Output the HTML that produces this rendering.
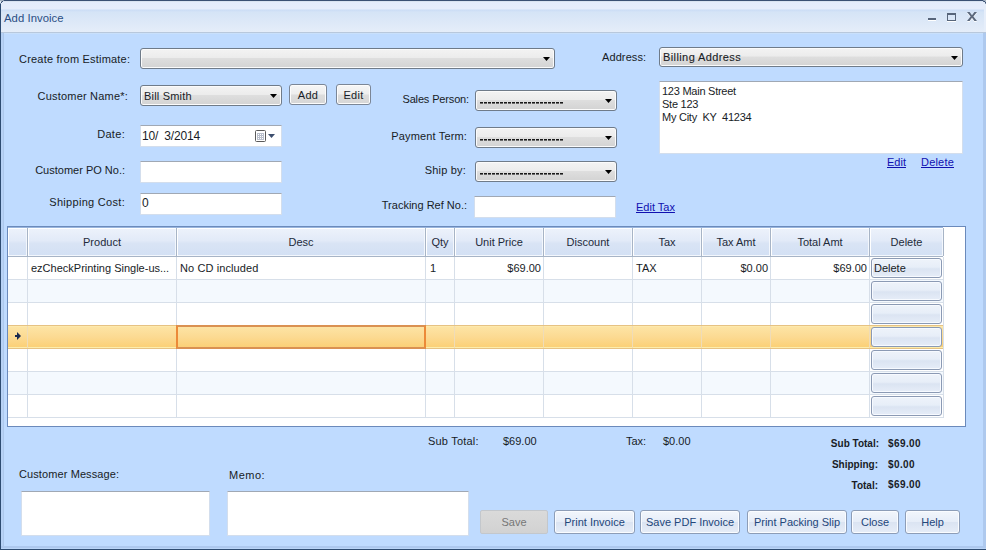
<!DOCTYPE html>
<html><head><meta charset="utf-8">
<style>
*{box-sizing:border-box}
html,body{margin:0;padding:0;width:986px;height:550px;overflow:hidden;background:#bfdbff}
body{position:relative;font-family:"Liberation Sans",sans-serif;font-size:11px;color:#181c26}
.a{position:absolute}
.t{position:absolute;font-size:11px;line-height:13px;white-space:pre}
.r{text-align:right}
.c{text-align:center}
.combo{position:absolute;border:1px solid #6f7b89;border-radius:3px;background:linear-gradient(#f3f3f3 0%,#ececec 45%,#dedede 50%,#d3d3d3 100%);box-shadow:inset 0 0 0 1px #fbfbfb}
.btn{position:absolute;border:1px solid #8d9db7;border-radius:3px;background:linear-gradient(#f2f6fc 0%,#e6edf8 50%,#dbe4f2 52%,#e6edf8 100%);box-shadow:inset 0 0 0 1px #fafcff;color:#23467a;text-align:center;font-size:11px;white-space:pre}
.lnk{position:absolute;color:#1010b0;text-decoration:underline;font-size:11px;line-height:13px;white-space:pre}
</style></head><body>
<div class="a" style="left:0px;top:0px;width:986px;height:550px;background:#bfdbff"></div>
<div class="a" style="left:0px;top:0px;width:986px;height:34px;background:linear-gradient(#3a5073 0px,#3a5073 1px,#d9e3f0 1px,#d9e3f0 2px,#e4ecfb 2px,#e6edfb 9px,#cbddf5 10px,#d5e4f6 12px,#e5edf9 32px,#b8c8dc 32px,#b8c8dc 33px,#c9e0fb 33px,#c9e0fb 34px)"></div>
<div class="a" style="left:0px;top:0px;width:1px;height:550px;background:#2e4c72"></div>
<div class="a" style="left:1px;top:33px;width:2px;height:514px;background:#b7d2f6"></div>
<div class="a" style="left:3px;top:33px;width:1px;height:514px;background:#adc8ec"></div>
<div class="a" style="left:983px;top:33px;width:3px;height:514px;background:#aec9ee"></div>
<div class="a" style="left:984px;top:1px;width:2px;height:31px;background:#e6eefa"></div>
<div class="a" style="left:1px;top:546px;width:985px;height:2px;background:#adc8ee"></div>
<div class="a" style="left:1px;top:548px;width:985px;height:1px;background:#bad5f8"></div>
<div class="a" style="left:0px;top:549px;width:986px;height:1px;background:#2e4c72"></div>
<div class="a" style="left:0px;top:0px;width:1px;height:1px;background:#a9b5c3"></div>
<div class="a" style="left:1px;top:0px;width:1px;height:1px;background:#a9b5c3"></div>
<div class="a" style="left:2px;top:0px;width:1px;height:1px;background:#a9b5c3"></div>
<div class="a" style="left:3px;top:0px;width:1px;height:1px;background:#7d8ea6"></div>
<div class="a" style="left:0px;top:1px;width:1px;height:1px;background:#dfe8f3"></div>
<div class="a" style="left:1px;top:1px;width:1px;height:1px;background:#8c9db2"></div>
<div class="a" style="left:2px;top:1px;width:1px;height:1px;background:#3a5073"></div>
<div class="a" style="left:0px;top:2px;width:1px;height:1px;background:#e3ecf7"></div>
<div class="a" style="left:1px;top:2px;width:1px;height:1px;background:#3a5073"></div>
<div class="a" style="left:0px;top:3px;width:1px;height:1px;background:#7e90a8"></div>
<div class="a" style="left:983px;top:0px;width:1px;height:1px;background:#7d8ea6"></div>
<div class="a" style="left:984px;top:0px;width:1px;height:1px;background:#a9b5c3"></div>
<div class="a" style="left:985px;top:0px;width:1px;height:1px;background:#a9b5c3"></div>
<div class="a" style="left:983px;top:1px;width:1px;height:1px;background:#5a6e8a"></div>
<div class="a" style="left:984px;top:1px;width:1px;height:1px;background:#3a5073"></div>
<div class="a" style="left:985px;top:1px;width:1px;height:1px;background:#a9b5c3"></div>
<div class="a" style="left:985px;top:2px;width:1px;height:1px;background:#3a5073"></div>
<div class="a" style="left:984px;top:2px;width:1px;height:1px;background:#dfe8f3"></div>
<div class="a" style="left:985px;top:3px;width:1px;height:1px;background:#7e90a8"></div>
<div class="t" style="left:4px;top:12px;color:#2a4e84;font-size:11.3px;letter-spacing:0.05px">Add Invoice</div>
<div class="a" style="left:928px;top:18px;width:8px;height:2px;background:#57657a;box-shadow:0 1px 0 #fff"></div>
<div class="a" style="left:947px;top:13px;width:9px;height:8px;border:1px solid #57657a;border-top-width:2px;box-shadow:0 1px 0 #fff"></div>
<svg class="a" style="left:967px;top:12px" width="10" height="10" viewBox="0 0 10 10"><path d="M0 1 L2.6 1 L5 4.2 L7.4 1 L10 1 L6.4 5.5 L10 10 L7.4 10 L5 6.8 L2.6 10 L0 10 L3.6 5.5 Z" fill="#fff" opacity="0.9"/><path d="M0 0 L2.6 0 L5 3.2 L7.4 0 L10 0 L6.4 4.5 L10 9 L7.4 9 L5 5.8 L2.6 9 L0 9 L3.6 4.5 Z" fill="#5b687c"/></svg>
<div class="t" style="left:19px;top:53px;letter-spacing:0.2px">Create from Estimate:</div>
<div class="t r" style="left:0;width:128px;top:90px;letter-spacing:0.2px">Customer Name*:</div>
<div class="t r" style="left:0;width:125px;top:128px;letter-spacing:0.3px">Date:</div>
<div class="t r" style="left:0;width:125px;top:164px;">Customer PO No.:</div>
<div class="t r" style="left:0;width:125px;top:196px;letter-spacing:0.3px">Shipping Cost:</div>
<div class="combo" style="left:140px;top:48px;width:415px;height:21px;"></div>
<svg class="a" style="left:543px;top:57px" width="7" height="5" viewBox="0 0 7 5"><path d="M0 0 L7 0 L3.5 4 Z" fill="#000"/></svg>
<div class="combo" style="left:140px;top:85px;width:142px;height:21px;"><div class="t" style="left:3px;top:4px;letter-spacing:0.2px">Bill Smith</div></div>
<svg class="a" style="left:270px;top:94px" width="7" height="5" viewBox="0 0 7 5"><path d="M0 0 L7 0 L3.5 4 Z" fill="#000"/></svg>
<div class="a" style="left:289px;top:84px;width:38px;height:21px;background:linear-gradient(#f6f6f6 0%,#eeeeee 48%,#dddddd 52%,#d6d6d6 100%);border:1px solid #7b8696;border-radius:3px;box-shadow:inset 0 0 0 1px #fcfcfc"><div class="t c" style="left:0;width:36px;top:4px;letter-spacing:0.3px">Add</div></div>
<div class="a"  style="left:336px;top:84px;width:35px;height:21px;background:linear-gradient(#f6f6f6 0%,#eeeeee 48%,#dddddd 52%,#d6d6d6 100%);border:1px solid #7b8696;border-radius:3px;box-shadow:inset 0 0 0 1px #fcfcfc"><div class="t c" style="left:0;width:33px;top:4px;letter-spacing:0.3px">Edit</div></div>
<div class="a" style="left:140px;top:125px;width:142px;height:22px;background:#fff;border:1px solid #d3deed;border-top-color:#a0a8b4"><div class="t" style="left:1px;top:3px;font-size:12px;line-height:14px;letter-spacing:-0.2px">10/  3/2014</div></div>
<svg class="a" style="left:255px;top:130px" width="21" height="12" viewBox="0 0 21 12"><rect x="0.5" y="0.5" width="10" height="11" rx="1" fill="#fff" stroke="#5a5a5a"/><rect x="2" y="3" width="7" height="7" fill="#b9bfcc"/><rect x="3" y="4" width="1" height="1" fill="#fff"/><rect x="3" y="6" width="1" height="1" fill="#fff"/><rect x="3" y="8" width="1" height="1" fill="#fff"/><rect x="5" y="4" width="1" height="1" fill="#fff"/><rect x="5" y="6" width="1" height="1" fill="#fff"/><rect x="5" y="8" width="1" height="1" fill="#fff"/><rect x="7" y="4" width="1" height="1" fill="#fff"/><rect x="7" y="6" width="1" height="1" fill="#fff"/><rect x="7" y="8" width="1" height="1" fill="#fff"/><path d="M13 4 L20 4 L16.5 8 Z" fill="#3c4e6e"/></svg>
<div class="a" style="left:140px;top:161px;width:142px;height:22px;background:#fff;border:1px solid #d3deed;border-top-color:#a0a8b4"></div>
<div class="a" style="left:140px;top:193px;width:142px;height:22px;background:#fff;border:1px solid #d3deed;border-top-color:#a0a8b4"><div class="t" style="left:1px;top:2px;font-size:12px;line-height:14px">0</div></div>
<div class="t r" style="left:0;width:469px;top:93px;letter-spacing:-0.15px">Sales Person:</div>
<div class="t r" style="left:0;width:467px;top:130px;letter-spacing:0.15px">Payment Term:</div>
<div class="t r" style="left:0;width:466px;top:164px;letter-spacing:0.2px">Ship by:</div>
<div class="t r" style="left:0;width:467px;top:199px;">Tracking Ref No.:</div>
<div class="combo" style="left:475px;top:90px;width:142px;height:21px;"><svg class="a" style="left:4px;top:11px" width="84" height="2" shape-rendering="crispEdges" fill="#151515"><rect x="0" y="0" width="3" height="1" fill="#1a1a1a"/><rect x="0" y="1" width="3" height="1" fill="#6a6a6a"/><rect x="4" y="0" width="3" height="1" fill="#1a1a1a"/><rect x="4" y="1" width="3" height="1" fill="#6a6a6a"/><rect x="8" y="0" width="3" height="1" fill="#1a1a1a"/><rect x="8" y="1" width="3" height="1" fill="#6a6a6a"/><rect x="12" y="0" width="3" height="1" fill="#1a1a1a"/><rect x="12" y="1" width="3" height="1" fill="#6a6a6a"/><rect x="16" y="0" width="3" height="1" fill="#1a1a1a"/><rect x="16" y="1" width="3" height="1" fill="#6a6a6a"/><rect x="20" y="0" width="3" height="1" fill="#1a1a1a"/><rect x="20" y="1" width="3" height="1" fill="#6a6a6a"/><rect x="24" y="0" width="3" height="1" fill="#1a1a1a"/><rect x="24" y="1" width="3" height="1" fill="#6a6a6a"/><rect x="28" y="0" width="3" height="1" fill="#1a1a1a"/><rect x="28" y="1" width="3" height="1" fill="#6a6a6a"/><rect x="32" y="0" width="3" height="1" fill="#1a1a1a"/><rect x="32" y="1" width="3" height="1" fill="#6a6a6a"/><rect x="36" y="0" width="3" height="1" fill="#1a1a1a"/><rect x="36" y="1" width="3" height="1" fill="#6a6a6a"/><rect x="40" y="0" width="3" height="1" fill="#1a1a1a"/><rect x="40" y="1" width="3" height="1" fill="#6a6a6a"/><rect x="44" y="0" width="3" height="1" fill="#1a1a1a"/><rect x="44" y="1" width="3" height="1" fill="#6a6a6a"/><rect x="48" y="0" width="3" height="1" fill="#1a1a1a"/><rect x="48" y="1" width="3" height="1" fill="#6a6a6a"/><rect x="52" y="0" width="3" height="1" fill="#1a1a1a"/><rect x="52" y="1" width="3" height="1" fill="#6a6a6a"/><rect x="56" y="0" width="3" height="1" fill="#1a1a1a"/><rect x="56" y="1" width="3" height="1" fill="#6a6a6a"/><rect x="60" y="0" width="3" height="1" fill="#1a1a1a"/><rect x="60" y="1" width="3" height="1" fill="#6a6a6a"/><rect x="64" y="0" width="3" height="1" fill="#1a1a1a"/><rect x="64" y="1" width="3" height="1" fill="#6a6a6a"/><rect x="68" y="0" width="3" height="1" fill="#1a1a1a"/><rect x="68" y="1" width="3" height="1" fill="#6a6a6a"/><rect x="72" y="0" width="3" height="1" fill="#1a1a1a"/><rect x="72" y="1" width="3" height="1" fill="#6a6a6a"/><rect x="76" y="0" width="3" height="1" fill="#1a1a1a"/><rect x="76" y="1" width="3" height="1" fill="#6a6a6a"/><rect x="80" y="0" width="3" height="1" fill="#1a1a1a"/><rect x="80" y="1" width="3" height="1" fill="#6a6a6a"/></svg></div>
<svg class="a" style="left:605px;top:99px" width="7" height="5" viewBox="0 0 7 5"><path d="M0 0 L7 0 L3.5 4 Z" fill="#000"/></svg>
<div class="combo" style="left:475px;top:127px;width:142px;height:21px;"><svg class="a" style="left:4px;top:11px" width="84" height="2" shape-rendering="crispEdges" fill="#151515"><rect x="0" y="0" width="3" height="1" fill="#1a1a1a"/><rect x="0" y="1" width="3" height="1" fill="#6a6a6a"/><rect x="4" y="0" width="3" height="1" fill="#1a1a1a"/><rect x="4" y="1" width="3" height="1" fill="#6a6a6a"/><rect x="8" y="0" width="3" height="1" fill="#1a1a1a"/><rect x="8" y="1" width="3" height="1" fill="#6a6a6a"/><rect x="12" y="0" width="3" height="1" fill="#1a1a1a"/><rect x="12" y="1" width="3" height="1" fill="#6a6a6a"/><rect x="16" y="0" width="3" height="1" fill="#1a1a1a"/><rect x="16" y="1" width="3" height="1" fill="#6a6a6a"/><rect x="20" y="0" width="3" height="1" fill="#1a1a1a"/><rect x="20" y="1" width="3" height="1" fill="#6a6a6a"/><rect x="24" y="0" width="3" height="1" fill="#1a1a1a"/><rect x="24" y="1" width="3" height="1" fill="#6a6a6a"/><rect x="28" y="0" width="3" height="1" fill="#1a1a1a"/><rect x="28" y="1" width="3" height="1" fill="#6a6a6a"/><rect x="32" y="0" width="3" height="1" fill="#1a1a1a"/><rect x="32" y="1" width="3" height="1" fill="#6a6a6a"/><rect x="36" y="0" width="3" height="1" fill="#1a1a1a"/><rect x="36" y="1" width="3" height="1" fill="#6a6a6a"/><rect x="40" y="0" width="3" height="1" fill="#1a1a1a"/><rect x="40" y="1" width="3" height="1" fill="#6a6a6a"/><rect x="44" y="0" width="3" height="1" fill="#1a1a1a"/><rect x="44" y="1" width="3" height="1" fill="#6a6a6a"/><rect x="48" y="0" width="3" height="1" fill="#1a1a1a"/><rect x="48" y="1" width="3" height="1" fill="#6a6a6a"/><rect x="52" y="0" width="3" height="1" fill="#1a1a1a"/><rect x="52" y="1" width="3" height="1" fill="#6a6a6a"/><rect x="56" y="0" width="3" height="1" fill="#1a1a1a"/><rect x="56" y="1" width="3" height="1" fill="#6a6a6a"/><rect x="60" y="0" width="3" height="1" fill="#1a1a1a"/><rect x="60" y="1" width="3" height="1" fill="#6a6a6a"/><rect x="64" y="0" width="3" height="1" fill="#1a1a1a"/><rect x="64" y="1" width="3" height="1" fill="#6a6a6a"/><rect x="68" y="0" width="3" height="1" fill="#1a1a1a"/><rect x="68" y="1" width="3" height="1" fill="#6a6a6a"/><rect x="72" y="0" width="3" height="1" fill="#1a1a1a"/><rect x="72" y="1" width="3" height="1" fill="#6a6a6a"/><rect x="76" y="0" width="3" height="1" fill="#1a1a1a"/><rect x="76" y="1" width="3" height="1" fill="#6a6a6a"/><rect x="80" y="0" width="3" height="1" fill="#1a1a1a"/><rect x="80" y="1" width="3" height="1" fill="#6a6a6a"/></svg></div>
<svg class="a" style="left:605px;top:136px" width="7" height="5" viewBox="0 0 7 5"><path d="M0 0 L7 0 L3.5 4 Z" fill="#000"/></svg>
<div class="combo" style="left:475px;top:161px;width:142px;height:21px;"><svg class="a" style="left:4px;top:11px" width="84" height="2" shape-rendering="crispEdges" fill="#151515"><rect x="0" y="0" width="3" height="1" fill="#1a1a1a"/><rect x="0" y="1" width="3" height="1" fill="#6a6a6a"/><rect x="4" y="0" width="3" height="1" fill="#1a1a1a"/><rect x="4" y="1" width="3" height="1" fill="#6a6a6a"/><rect x="8" y="0" width="3" height="1" fill="#1a1a1a"/><rect x="8" y="1" width="3" height="1" fill="#6a6a6a"/><rect x="12" y="0" width="3" height="1" fill="#1a1a1a"/><rect x="12" y="1" width="3" height="1" fill="#6a6a6a"/><rect x="16" y="0" width="3" height="1" fill="#1a1a1a"/><rect x="16" y="1" width="3" height="1" fill="#6a6a6a"/><rect x="20" y="0" width="3" height="1" fill="#1a1a1a"/><rect x="20" y="1" width="3" height="1" fill="#6a6a6a"/><rect x="24" y="0" width="3" height="1" fill="#1a1a1a"/><rect x="24" y="1" width="3" height="1" fill="#6a6a6a"/><rect x="28" y="0" width="3" height="1" fill="#1a1a1a"/><rect x="28" y="1" width="3" height="1" fill="#6a6a6a"/><rect x="32" y="0" width="3" height="1" fill="#1a1a1a"/><rect x="32" y="1" width="3" height="1" fill="#6a6a6a"/><rect x="36" y="0" width="3" height="1" fill="#1a1a1a"/><rect x="36" y="1" width="3" height="1" fill="#6a6a6a"/><rect x="40" y="0" width="3" height="1" fill="#1a1a1a"/><rect x="40" y="1" width="3" height="1" fill="#6a6a6a"/><rect x="44" y="0" width="3" height="1" fill="#1a1a1a"/><rect x="44" y="1" width="3" height="1" fill="#6a6a6a"/><rect x="48" y="0" width="3" height="1" fill="#1a1a1a"/><rect x="48" y="1" width="3" height="1" fill="#6a6a6a"/><rect x="52" y="0" width="3" height="1" fill="#1a1a1a"/><rect x="52" y="1" width="3" height="1" fill="#6a6a6a"/><rect x="56" y="0" width="3" height="1" fill="#1a1a1a"/><rect x="56" y="1" width="3" height="1" fill="#6a6a6a"/><rect x="60" y="0" width="3" height="1" fill="#1a1a1a"/><rect x="60" y="1" width="3" height="1" fill="#6a6a6a"/><rect x="64" y="0" width="3" height="1" fill="#1a1a1a"/><rect x="64" y="1" width="3" height="1" fill="#6a6a6a"/><rect x="68" y="0" width="3" height="1" fill="#1a1a1a"/><rect x="68" y="1" width="3" height="1" fill="#6a6a6a"/><rect x="72" y="0" width="3" height="1" fill="#1a1a1a"/><rect x="72" y="1" width="3" height="1" fill="#6a6a6a"/><rect x="76" y="0" width="3" height="1" fill="#1a1a1a"/><rect x="76" y="1" width="3" height="1" fill="#6a6a6a"/><rect x="80" y="0" width="3" height="1" fill="#1a1a1a"/><rect x="80" y="1" width="3" height="1" fill="#6a6a6a"/></svg></div>
<svg class="a" style="left:605px;top:170px" width="7" height="5" viewBox="0 0 7 5"><path d="M0 0 L7 0 L3.5 4 Z" fill="#000"/></svg>
<div class="a" style="left:474px;top:196px;width:142px;height:22px;background:#fff;border:1px solid #d3deed;border-top-color:#a0a8b4"></div>
<div class="lnk" style="left:636px;top:201px">Edit Tax</div>
<div class="t" style="left:602px;top:51px;letter-spacing:0.1px">Address:</div>
<div class="combo" style="left:659px;top:47px;width:304px;height:20px;"><div class="t" style="left:3px;top:3px;letter-spacing:0.4px;-webkit-text-stroke:0.1px #1b1b1b">Billing Address</div></div>
<svg class="a" style="left:951px;top:56px" width="7" height="5" viewBox="0 0 7 5"><path d="M0 0 L7 0 L3.5 4 Z" fill="#000"/></svg>
<div class="a" style="left:659px;top:81px;width:304px;height:73px;background:#fff;border:1px solid #d3deed;border-top-color:#a0a8b4"><div class="t" style="left:2px;top:3px;line-height:13px;letter-spacing:-0.25px">123 Main Street
Ste 123
My City  KY  41234</div></div>
<div class="lnk" style="left:887px;top:156px">Edit</div>
<div class="lnk" style="left:921px;top:156px;letter-spacing:0.2px">Delete</div>
<div class="a" style="left:7px;top:226px;width:959px;height:201px;background:#fff;border:1px solid #6b8abb"></div>
<div class="a" style="left:8px;top:227px;width:935px;height:1px;background:#9ab6de"></div>
<div class="a" style="left:8px;top:228px;width:19px;height:28px;background:linear-gradient(#edf2fb 0%,#e2eaf8 45%,#d9e4f5 55%,#d3e0f4 100%);box-shadow:inset 1px 1px 0 #fff,inset -1px -1px 0 #f3f7fd"></div>
<div class="a" style="left:27px;top:228px;width:1px;height:28px;background:#a7b4c6"></div>
<div class="a" style="left:28px;top:228px;width:148px;height:28px;background:linear-gradient(#edf2fb 0%,#e2eaf8 45%,#d9e4f5 55%,#d3e0f4 100%);box-shadow:inset 1px 1px 0 #fff,inset -1px -1px 0 #f3f7fd"></div>
<div class="a" style="left:176px;top:228px;width:1px;height:28px;background:#a7b4c6"></div>
<div class="a" style="left:177px;top:228px;width:248px;height:28px;background:linear-gradient(#edf2fb 0%,#e2eaf8 45%,#d9e4f5 55%,#d3e0f4 100%);box-shadow:inset 1px 1px 0 #fff,inset -1px -1px 0 #f3f7fd"></div>
<div class="a" style="left:425px;top:228px;width:1px;height:28px;background:#a7b4c6"></div>
<div class="a" style="left:426px;top:228px;width:28px;height:28px;background:linear-gradient(#edf2fb 0%,#e2eaf8 45%,#d9e4f5 55%,#d3e0f4 100%);box-shadow:inset 1px 1px 0 #fff,inset -1px -1px 0 #f3f7fd"></div>
<div class="a" style="left:454px;top:228px;width:1px;height:28px;background:#a7b4c6"></div>
<div class="a" style="left:455px;top:228px;width:88px;height:28px;background:linear-gradient(#edf2fb 0%,#e2eaf8 45%,#d9e4f5 55%,#d3e0f4 100%);box-shadow:inset 1px 1px 0 #fff,inset -1px -1px 0 #f3f7fd"></div>
<div class="a" style="left:543px;top:228px;width:1px;height:28px;background:#a7b4c6"></div>
<div class="a" style="left:544px;top:228px;width:88px;height:28px;background:linear-gradient(#edf2fb 0%,#e2eaf8 45%,#d9e4f5 55%,#d3e0f4 100%);box-shadow:inset 1px 1px 0 #fff,inset -1px -1px 0 #f3f7fd"></div>
<div class="a" style="left:632px;top:228px;width:1px;height:28px;background:#a7b4c6"></div>
<div class="a" style="left:633px;top:228px;width:68px;height:28px;background:linear-gradient(#edf2fb 0%,#e2eaf8 45%,#d9e4f5 55%,#d3e0f4 100%);box-shadow:inset 1px 1px 0 #fff,inset -1px -1px 0 #f3f7fd"></div>
<div class="a" style="left:701px;top:228px;width:1px;height:28px;background:#a7b4c6"></div>
<div class="a" style="left:702px;top:228px;width:68px;height:28px;background:linear-gradient(#edf2fb 0%,#e2eaf8 45%,#d9e4f5 55%,#d3e0f4 100%);box-shadow:inset 1px 1px 0 #fff,inset -1px -1px 0 #f3f7fd"></div>
<div class="a" style="left:770px;top:228px;width:1px;height:28px;background:#a7b4c6"></div>
<div class="a" style="left:771px;top:228px;width:98px;height:28px;background:linear-gradient(#edf2fb 0%,#e2eaf8 45%,#d9e4f5 55%,#d3e0f4 100%);box-shadow:inset 1px 1px 0 #fff,inset -1px -1px 0 #f3f7fd"></div>
<div class="a" style="left:869px;top:228px;width:1px;height:28px;background:#a7b4c6"></div>
<div class="a" style="left:870px;top:228px;width:73px;height:28px;background:linear-gradient(#edf2fb 0%,#e2eaf8 45%,#d9e4f5 55%,#d3e0f4 100%);box-shadow:inset 1px 1px 0 #fff,inset -1px -1px 0 #f3f7fd"></div>
<div class="a" style="left:943px;top:228px;width:1px;height:28px;background:#a7b4c6"></div>
<div class="a" style="left:8px;top:256px;width:935px;height:1px;background:#a7b4c6"></div>
<div class="a" style="left:8px;top:257px;width:935px;height:22px;background:#fff"></div>
<div class="a" style="left:8px;top:280px;width:935px;height:22px;background:#f4f9fe"></div>
<div class="a" style="left:8px;top:303px;width:935px;height:22px;background:#fff"></div>
<div class="a" style="left:8px;top:349px;width:935px;height:22px;background:#fff"></div>
<div class="a" style="left:8px;top:372px;width:935px;height:22px;background:#f4f9fe"></div>
<div class="a" style="left:8px;top:395px;width:935px;height:22px;background:#fff"></div>
<div class="a" style="left:27px;top:257px;width:1px;height:161px;background:#d7dfe9"></div>
<div class="a" style="left:176px;top:257px;width:1px;height:161px;background:#d7dfe9"></div>
<div class="a" style="left:425px;top:257px;width:1px;height:161px;background:#d7dfe9"></div>
<div class="a" style="left:454px;top:257px;width:1px;height:161px;background:#d7dfe9"></div>
<div class="a" style="left:543px;top:257px;width:1px;height:161px;background:#d7dfe9"></div>
<div class="a" style="left:632px;top:257px;width:1px;height:161px;background:#d7dfe9"></div>
<div class="a" style="left:701px;top:257px;width:1px;height:161px;background:#d7dfe9"></div>
<div class="a" style="left:770px;top:257px;width:1px;height:161px;background:#d7dfe9"></div>
<div class="a" style="left:869px;top:257px;width:1px;height:161px;background:#d7dfe9"></div>
<div class="a" style="left:943px;top:257px;width:1px;height:161px;background:#d7dfe9"></div>
<div class="a" style="left:8px;top:279px;width:935px;height:1px;background:#d7dfe9"></div>
<div class="a" style="left:8px;top:302px;width:935px;height:1px;background:#d7dfe9"></div>
<div class="a" style="left:8px;top:325px;width:935px;height:1px;background:#d7dfe9"></div>
<div class="a" style="left:8px;top:348px;width:935px;height:1px;background:#d7dfe9"></div>
<div class="a" style="left:8px;top:371px;width:935px;height:1px;background:#d7dfe9"></div>
<div class="a" style="left:8px;top:394px;width:935px;height:1px;background:#d7dfe9"></div>
<div class="a" style="left:8px;top:417px;width:935px;height:1px;background:#d7dfe9"></div>
<div class="a" style="left:8px;top:325px;width:935px;height:1px;background:#e6c283"></div>
<div class="a" style="left:8px;top:348px;width:935px;height:1px;background:#e6c283"></div>
<div class="a" style="left:8px;top:326px;width:935px;height:22px;background:linear-gradient(#fde5a6,#fcda92 50%,#fbcf74);box-shadow:inset 0 1px 0 #fde9ac,inset 0 -1px 0 #fdedac"></div>
<div class="a" style="left:27px;top:326px;width:1px;height:22px;background:#efdcb8"></div>
<div class="a" style="left:176px;top:326px;width:1px;height:22px;background:#efdcb8"></div>
<div class="a" style="left:425px;top:326px;width:1px;height:22px;background:#efdcb8"></div>
<div class="a" style="left:454px;top:326px;width:1px;height:22px;background:#efdcb8"></div>
<div class="a" style="left:543px;top:326px;width:1px;height:22px;background:#efdcb8"></div>
<div class="a" style="left:632px;top:326px;width:1px;height:22px;background:#efdcb8"></div>
<div class="a" style="left:701px;top:326px;width:1px;height:22px;background:#efdcb8"></div>
<div class="a" style="left:770px;top:326px;width:1px;height:22px;background:#efdcb8"></div>
<div class="a" style="left:869px;top:326px;width:1px;height:22px;background:#efdcb8"></div>
<div class="a" style="left:176px;top:325px;width:250px;height:24px;border:2px solid #ec8a38;border-top-color:#da9152;border-bottom-color:#da9152"></div>
<svg class="a" style="left:14px;top:331px" width="9" height="10" viewBox="0 0 9 10"><rect x="1" y="4" width="2.5" height="2" fill="#1a2a4e"/><path d="M3 1 L7 5 L3 9 Z" fill="#1a2a4e"/></svg>
<div class="t c" style="left:28px;width:148px;top:236px;color:#1e2a3a">Product</div>
<div class="t c" style="left:177px;width:248px;top:236px;color:#1e2a3a">Desc</div>
<div class="t c" style="left:426px;width:28px;top:236px;color:#1e2a3a">Qty</div>
<div class="t c" style="left:455px;width:88px;top:236px;color:#1e2a3a">Unit Price</div>
<div class="t c" style="left:544px;width:88px;top:236px;color:#1e2a3a">Discount</div>
<div class="t c" style="left:633px;width:68px;top:236px;color:#1e2a3a">Tax</div>
<div class="t c" style="left:702px;width:68px;top:236px;color:#1e2a3a">Tax Amt</div>
<div class="t c" style="left:771px;width:98px;top:236px;color:#1e2a3a">Total Amt</div>
<div class="t c" style="left:870px;width:73px;top:236px;color:#1e2a3a">Delete</div>
<div class="t" style="left:31px;top:262px;">ezCheckPrinting Single-us...</div>
<div class="t" style="left:180px;top:262px;letter-spacing:0.1px">No CD included</div>
<div class="t" style="left:430px;top:262px;">1</div>
<div class="t r" style="left:455px;width:86px;top:262px">$69.00</div>
<div class="t" style="left:636px;top:262px;">TAX</div>
<div class="t r" style="left:702px;width:66px;top:262px">$0.00</div>
<div class="t r" style="left:771px;width:96px;top:262px">$69.00</div>
<div class="a" style="left:871px;top:258px;width:71px;height:20px;border:1px solid #8b9ab4;border-radius:3px;background:linear-gradient(#eef3fa 0%,#e7eef8 45%,#dbe4f2 55%,#e6edf8 100%);box-shadow:inset 0 0 0 1px #f7faff"><div class="t" style="left:2px;top:3px">Delete</div></div>
<div class="a" style="left:871px;top:281px;width:71px;height:20px;border:1px solid #8b9ab4;border-radius:3px;background:linear-gradient(#eef3fa 0%,#e7eef8 45%,#dbe4f2 55%,#e6edf8 100%);box-shadow:inset 0 0 0 1px #f7faff"><div class="t" style="left:2px;top:3px"></div></div>
<div class="a" style="left:871px;top:304px;width:71px;height:20px;border:1px solid #8b9ab4;border-radius:3px;background:linear-gradient(#eef3fa 0%,#e7eef8 45%,#dbe4f2 55%,#e6edf8 100%);box-shadow:inset 0 0 0 1px #f7faff"><div class="t" style="left:2px;top:3px"></div></div>
<div class="a" style="left:871px;top:327px;width:71px;height:20px;border:1px solid #8b9ab4;border-radius:3px;background:linear-gradient(#eef3fa 0%,#e7eef8 45%,#dbe4f2 55%,#e6edf8 100%);box-shadow:inset 0 0 0 1px #f7faff"><div class="t" style="left:2px;top:3px"></div></div>
<div class="a" style="left:871px;top:350px;width:71px;height:20px;border:1px solid #8b9ab4;border-radius:3px;background:linear-gradient(#eef3fa 0%,#e7eef8 45%,#dbe4f2 55%,#e6edf8 100%);box-shadow:inset 0 0 0 1px #f7faff"><div class="t" style="left:2px;top:3px"></div></div>
<div class="a" style="left:871px;top:373px;width:71px;height:20px;border:1px solid #8b9ab4;border-radius:3px;background:linear-gradient(#eef3fa 0%,#e7eef8 45%,#dbe4f2 55%,#e6edf8 100%);box-shadow:inset 0 0 0 1px #f7faff"><div class="t" style="left:2px;top:3px"></div></div>
<div class="a" style="left:871px;top:396px;width:71px;height:20px;border:1px solid #8b9ab4;border-radius:3px;background:linear-gradient(#eef3fa 0%,#e7eef8 45%,#dbe4f2 55%,#e6edf8 100%);box-shadow:inset 0 0 0 1px #f7faff"><div class="t" style="left:2px;top:3px"></div></div>
<div class="t" style="left:428px;top:435px;letter-spacing:0.2px">Sub Total:</div>
<div class="t" style="left:503px;top:435px;">$69.00</div>
<div class="t" style="left:626px;top:435px;">Tax:</div>
<div class="t" style="left:663px;top:435px;">$0.00</div>
<div class="t r" style="left:0;width:879px;top:437px;font-weight:bold;font-size:10px">Sub Total:</div>
<div class="t" style="left:888px;top:437px;font-weight:bold;font-size:10px;letter-spacing:0.4px">$69.00</div>
<div class="t r" style="left:0;width:878px;top:458px;font-weight:bold;font-size:10px">Shipping:</div>
<div class="t" style="left:888px;top:458px;font-weight:bold;font-size:10px;letter-spacing:0.4px">$0.00</div>
<div class="t r" style="left:0;width:878px;top:479px;font-weight:bold;font-size:10px">Total:</div>
<div class="t" style="left:888px;top:478px;font-weight:bold;font-size:10px;letter-spacing:0.4px">$69.00</div>
<div class="t" style="left:19px;top:468px;letter-spacing:0.1px">Customer Message:</div>
<div class="t" style="left:229px;top:469px;letter-spacing:0.5px">Memo:</div>
<div class="a" style="left:21px;top:491px;width:189px;height:45px;background:#fff;border:1px solid #d3deed;border-top-color:#a0a8b4"></div>
<div class="a" style="left:227px;top:491px;width:242px;height:45px;background:#fff;border:1px solid #d3deed;border-top-color:#a0a8b4"></div>
<div class="btn" style="left:480px;top:510px;width:68px;height:24px;line-height:22px;color:#767676;border-color:#c3c7cc;border-radius:2px;background:linear-gradient(#dadada,#d2d2d2);box-shadow:none">Save</div>
<div class="btn" style="left:554px;top:510px;width:81px;height:24px;line-height:22px">Print Invoice</div>
<div class="btn" style="left:640px;top:510px;width:100px;height:24px;line-height:22px">Save PDF Invoice</div>
<div class="btn" style="left:747px;top:510px;width:100px;height:24px;line-height:22px">Print Packing Slip</div>
<div class="btn" style="left:851px;top:510px;width:48px;height:24px;line-height:22px">Close</div>
<div class="btn" style="left:905px;top:510px;width:55px;height:24px;line-height:22px">Help</div>
</body></html>
